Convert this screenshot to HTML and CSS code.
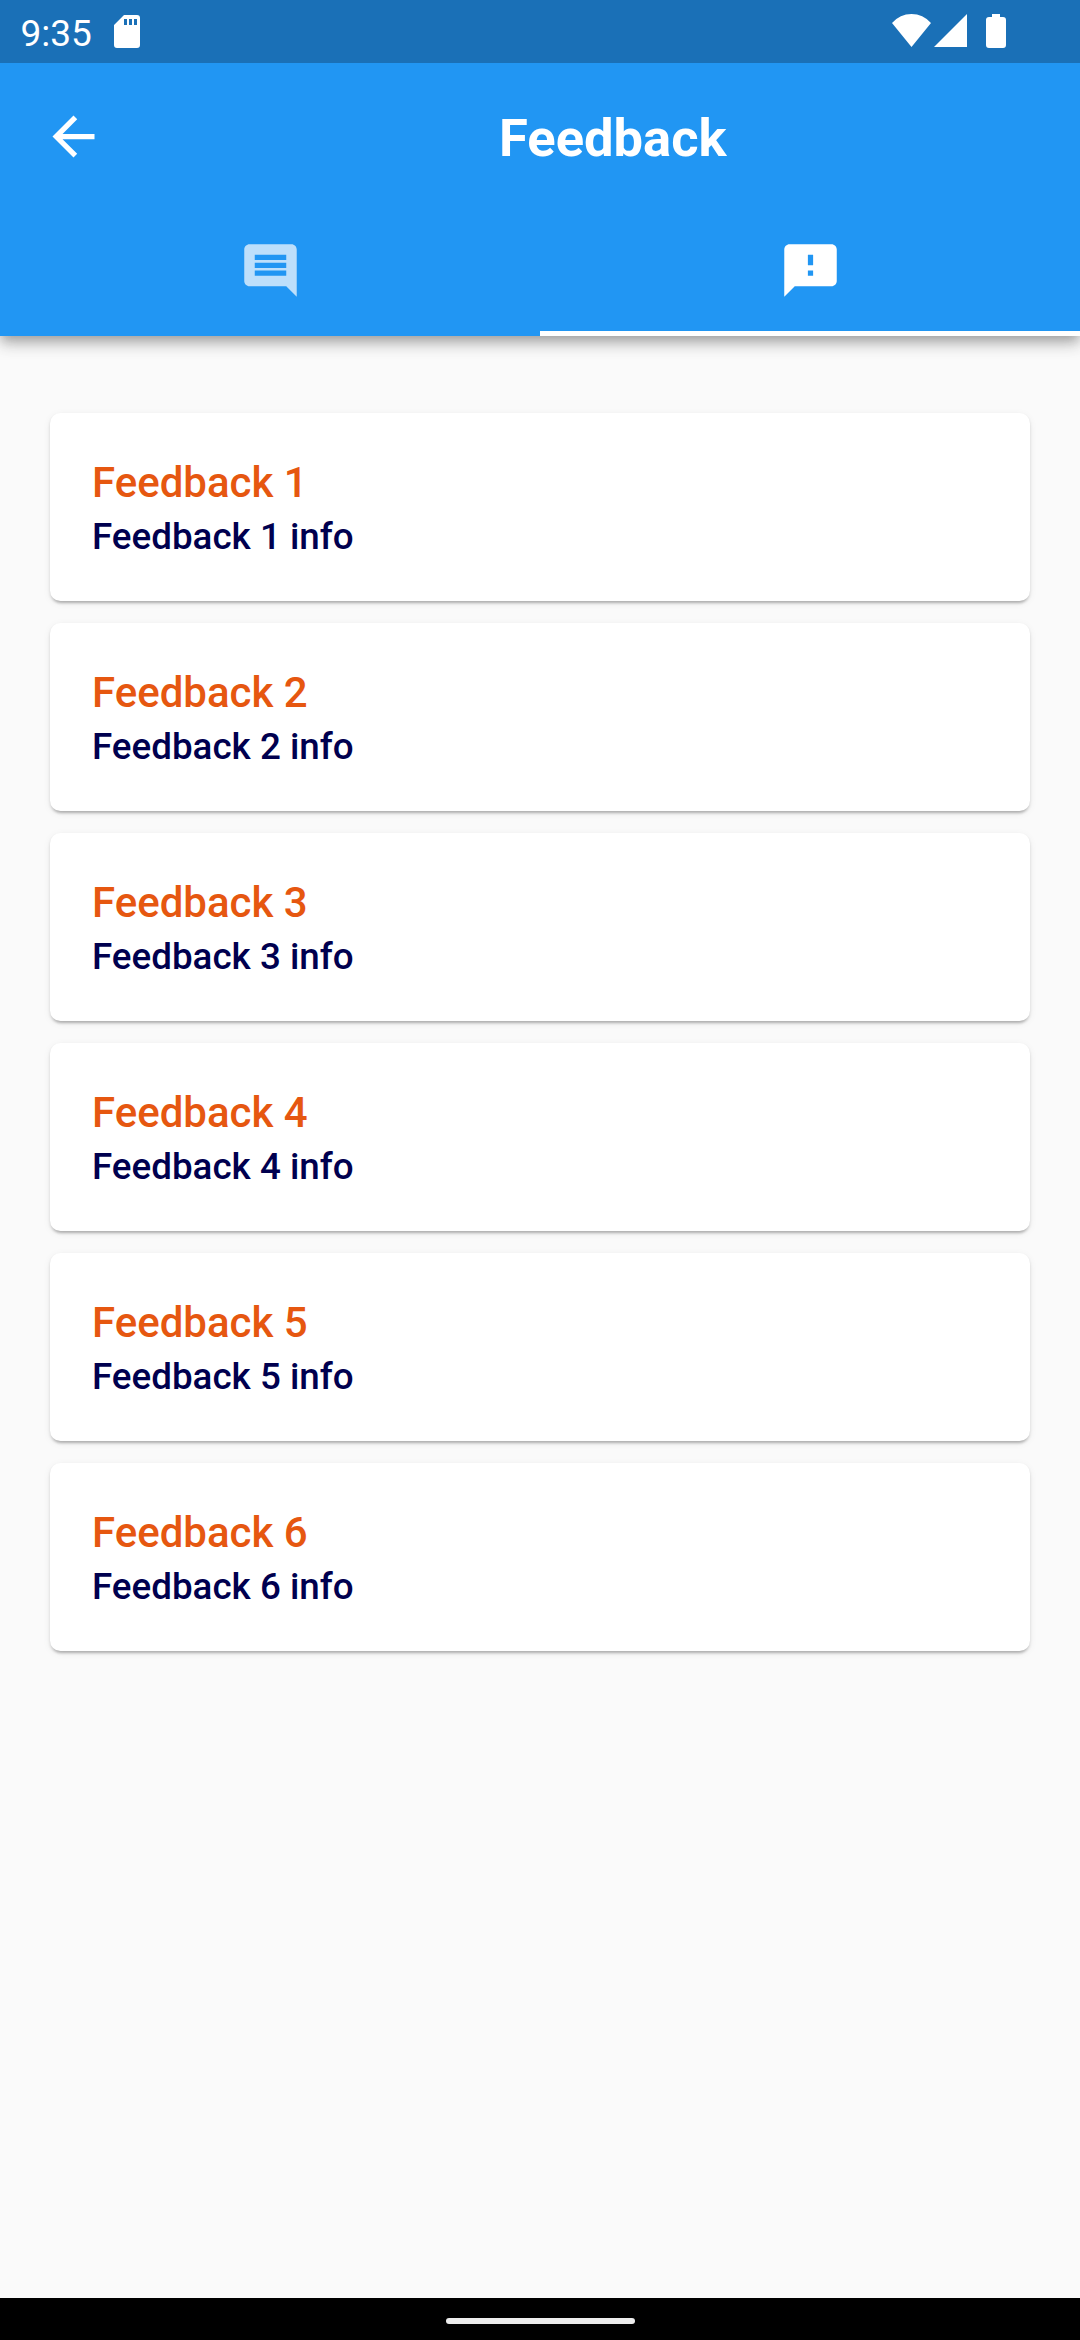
FILE: index.html
```html
<!DOCTYPE html>
<html lang="en">
<head>
<meta charset="utf-8">
<title>Feedback</title>
<link rel="stylesheet" href="styles.css">
</head>
<body>
<div class="screen">
  <header class="header">
    <div class="status">
      <span class="time">9:35</span>
      <svg class="sd" viewBox="0 0 26 33"><path fill-rule="evenodd" d="M10 0H23Q26 0 26 3V30Q26 33 23 33H3Q0 33 0 30V10ZM10 4V10H13V4ZM15 4V10H18V4ZM20 4V10H23V4Z"/></svg>
      <svg class="signals" viewBox="0 0 114 34"><path d="M0 9Q8 0 19.500 0T39 9L19.500 33ZM42 33 75 0V33ZM94 6Q94 3 97 3H100V0H108V3H111Q114 3 114 6V31Q114 34 111 34H97Q94 34 94 31Z"/></svg>
    </div>
    <div class="toolbar">
      <svg class="back" viewBox="0 0 24 24"><path d="M20 11H7.830l5.590-5.590L12 4l-8 8 8 8 1.410-1.410L7.830 13H20z"/></svg>
      <h1 class="title">Feedback</h1>
    </div>
    <nav class="tabs">
      <div class="tab"><svg class="icon" viewBox="0 0 24 24"><path d="M21.990 4c0-1.100-.89-2-1.990-2H4c-1.100 0-2 .9-2 2v12c0 1.100.9 2 2 2h14l4 4-.01-18zM18 14H6v-2h12v2zm0-3H6V9h12v2zm0-3H6V6h12v2z"/></svg></div>
      <div class="tab active"><svg class="icon" viewBox="0 0 24 24"><path d="M20 2H4c-1.100 0-1.990.9-1.990 2L2 22l4-4h14c1.100 0 2-.9 2-2V4c0-1.100-.9-2-2-2zm-7 12h-2v-2h2v2zm0-4h-2V6h2v4z"/></svg></div>
    </nav>
  </header>
  <main class="list">
    <article class="card"><h2 class="name">Feedback 1</h2><p class="info">Feedback 1 info</p></article>
    <article class="card"><h2 class="name">Feedback 2</h2><p class="info">Feedback 2 info</p></article>
    <article class="card"><h2 class="name">Feedback 3</h2><p class="info">Feedback 3 info</p></article>
    <article class="card"><h2 class="name">Feedback 4</h2><p class="info">Feedback 4 info</p></article>
    <article class="card"><h2 class="name">Feedback 5</h2><p class="info">Feedback 5 info</p></article>
    <article class="card"><h2 class="name">Feedback 6</h2><p class="info">Feedback 6 info</p></article>
  </main>
  <footer class="navbar"><div class="handle"></div></footer>
</div>
</body>
</html>
```
FILE: styles.css
```css
* { box-sizing: border-box; margin: 0; padding: 0; }
body { font-family: Roboto, sans-serif; background: #fafafa; }
svg { display: block; fill: #fff; }
.screen { width: 1080px; height: 2340px; display: flex; flex-direction: column; overflow: hidden; }
.header {
  height: 336px;
  flex: none;
  background: #2196f3;
  box-shadow: 0 5px 10px -2px rgba(0,0,0,.2), 0 10px 13px rgba(0,0,0,.14), 0 2px 20px rgba(0,0,0,.12);
}
.status { height: 63px; padding: 0 74px 0 20.5px; display: flex; align-items: flex-start; background: #1a70b7; }
.time { width: 93.5px; padding-top: 12px; font-size: 37px; line-height: 44px; color: #fff; white-space: nowrap; }
.sd { width: 26px; height: 33px; margin-top: 15px; }
.signals { width: 114px; height: 34px; margin: 14px 0 0 auto; }
.toolbar { height: 147px; padding-left: 42px; display: flex; align-items: center; }
.back { width: 63px; height: 63px; }
.title { margin-left: 394px; padding-top: 3px; font-size: 52.5px; line-height: 62px; font-weight: 700; color: #fff; }
.tabs { height: 126px; display: flex; }
.tab { flex: 1; padding-top: 28.5px; display: flex; justify-content: center; border-bottom: 5px solid transparent; }
.tab.active { border-bottom-color: #fff; }
.icon { width: 63px; height: 63px; opacity: .7; }
.active .icon { opacity: 1; }
.list { flex: 1; padding: 77px 50px 0; display: flex; flex-direction: column; gap: 22px; }
.card {
  height: 188px;
  padding: 45px 42px 0;
  background: #fff;
  border-radius: 10.5px;
  box-shadow: 0 5px 3px -3px rgba(0,0,0,.16), 0 2px 3px rgba(0,0,0,.14), 0 2px 8px rgba(0,0,0,.06);
}
.name { font-size: 42px; line-height: 49px; font-weight: 500; color: #e65710; }
.info { margin-top: 8px; font-size: 36.75px; line-height: 43px; font-weight: 500; color: #00004f; }
.navbar { height: 42px; background: #000; display: flex; justify-content: center; padding-top: 20px; }
.handle { width: 189px; height: 6px; border-radius: 3px; background: #ececec; }
```
